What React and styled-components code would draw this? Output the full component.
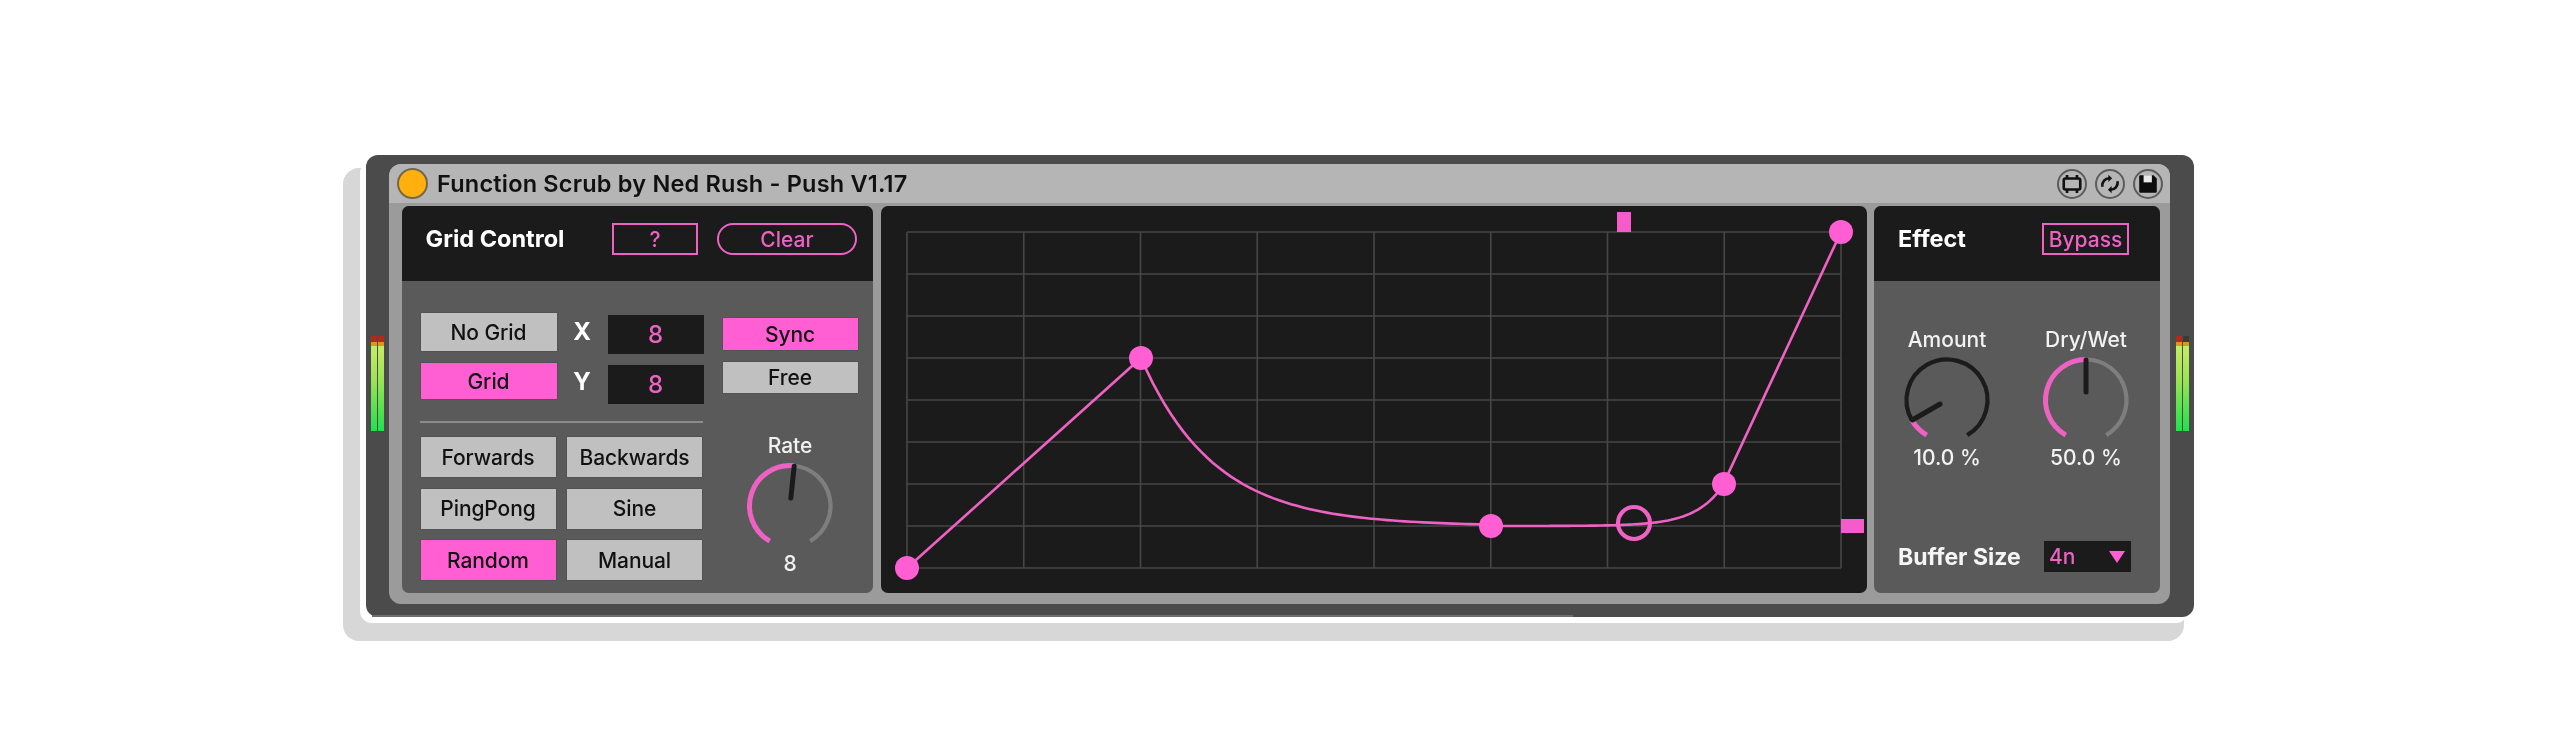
import React from 'react'
import styled, { createGlobalStyle } from 'styled-components'

const PINK = '#ff5fd2'
const LINE_PINK = '#ee62c4'
const DARK = '#1b1b1b'

const GlobalStyle = createGlobalStyle`
    html, body {
        margin: 0;
        background: #fff;
        overflow: hidden;
    }
    body {
        font-family: Inter, "Liberation Sans", sans-serif;
    }
`

// knob angles are measured from straight down, clockwise, 30deg dead zone either side
function polar(cx, cy, r, deg) {
    const a = (deg * Math.PI) / 180
    return [cx - r * Math.sin(a), cy + r * Math.cos(a)]
}

function arc(cx, cy, r, from, to) {
    const [x1, y1] = polar(cx, cy, r, from)
    const [x2, y2] = polar(cx, cy, r, to)
    const large = to - from > 180 ? 1 : 0
    return `M${x1} ${y1}A${r} ${r} 0 ${large} 1 ${x2} ${y2}`
}

function Knob({ value, track }) {
    const deg = 30 + 300 * value
    const [px1, py1] = polar(48, 48, 8, deg)
    const [px2, py2] = polar(48, 48, 40, deg)
    return (
        <KnobSvg viewBox="0 0 96 96">
            <path d={arc(48, 48, 40.5, deg, 330)} fill="none" stroke={track} strokeWidth="4.2" />
            <path d={arc(48, 48, 40.5, 30, deg)} fill="none" stroke={LINE_PINK} strokeWidth="5" />
            <line x1={px1} y1={py1} x2={px2} y2={py2} stroke={DARK} strokeWidth="5" strokeLinecap="round" />
        </KnobSvg>
    )
}

function buildCurve() {
    let d = 'M26 362L260 152'
    for (let x = 260; x <= 610; x += 6) {
        const y = 320 - 168 * Math.exp(-0.0136 * (x - 260))
        d += `L${x} ${y.toFixed(2)}`
    }
    for (let x = 610; x <= 843; x += 3) {
        const y = 320 - 42 * Math.exp(-0.036 * (843 - x))
        d += `L${x} ${y.toFixed(2)}`
    }
    return d + 'L960 26'
}

function Graph() {
    const cols = Array.from({ length: 9 }, (_, i) => 26 + (934 / 8) * i)
    const rows = Array.from({ length: 9 }, (_, i) => 26 + 42 * i)
    const nodes = [[26, 362], [260, 152], [610, 320], [843, 278], [960, 26]]
    return (
        <GraphSvg viewBox="0 0 986 387">
            {cols.map((x) => (
                <line key={x} x1={x} y1="26" x2={x} y2="362" stroke="#474747" strokeWidth="1.6" />
            ))}
            {rows.map((y) => (
                <line key={y} x1="26" y1={y} x2="960" y2={y} stroke="#474747" strokeWidth="1.6" />
            ))}
            <path d={buildCurve()} fill="none" stroke={LINE_PINK} strokeWidth="2.6" />
            {nodes.map(([x, y]) => (
                <circle key={x} cx={x} cy={y} r="12" fill={PINK} />
            ))}
            <circle cx="753" cy="317" r="16" fill="none" stroke={LINE_PINK} strokeWidth="4.2" />
            <rect x="736" y="6" width="14" height="20" fill="#f55bcb" />
            <rect x="960" y="313" width="23" height="14" fill="#f55bcb" />
        </GraphSvg>
    )
}

function Meter({ dim }) {
    return (
        <MeterWrap>
            <MeterBar />
            <MeterBar $dim={dim} />
        </MeterWrap>
    )
}

export default function App() {
    return (
        <Stage>
            <GlobalStyle />
            <Device>
                <Meter />
                <Rack>
                    <TitleBar>
                        <Led />
                        <Title>Function Scrub by Ned Rush - Push V1.17</Title>
                        <RoundIcon>
                            <svg width="22" height="22" viewBox="0 0 20 20" fill="none" stroke="#111" strokeWidth="2.4">
                                <rect x="2.5" y="5" width="15" height="10" rx="1.5" />
                                <path d="M5.5 5V1.8M14.5 5V1.8M5.5 15v3.2M14.5 15v3.2" />
                            </svg>
                        </RoundIcon>
                        <RoundIcon>
                            <svg width="22" height="22" viewBox="0 0 20 20" fill="none" stroke="#111" strokeWidth="2.4">
                                <path d="M3 12.5C2.6 8 5.5 5 9.5 4.8" />
                                <path d="M17 7.5c.4 4.5-2.5 7.5-6.5 7.7" />
                                <path d="M8.5 1.5l3.4 3.3-3.4 3.3z" fill="#111" stroke="none" />
                                <path d="M11.5 11.9l-3.4 3.3 3.4 3.3z" fill="#111" stroke="none" />
                            </svg>
                        </RoundIcon>
                        <RoundIcon>
                            <svg width="22" height="22" viewBox="0 0 20 20">
                                <path d="M3 2h12l3 3v12a1 1 0 0 1-1 1H3a1 1 0 0 1-1-1V3a1 1 0 0 1 1-1z" fill="#0c0c0c" />
                                <rect x="6" y="2" width="7.5" height="6.5" fill="#e8e8e8" />
                            </svg>
                        </RoundIcon>
                    </TitleBar>
                    <RackBody>
                        <Panel $width={471.5}>
                            <PanelHeader>
                                <HeaderTitle $width={186.5}>Grid Control</HeaderTitle>
                                <OutlineButton $width={86}>?</OutlineButton>
                                <OutlineButton $left={19} $width={140} $pill>Clear</OutlineButton>
                            </PanelHeader>
                            <GridBody>
                                <LeftCol>
                                    <ValueRow>
                                        <ToggleButton $h={38}>No Grid</ToggleButton>
                                        <AxisLabel>X</AxisLabel>
                                        <NumberBox>8</NumberBox>
                                    </ValueRow>
                                    <ValueRow $gap={9}>
                                        <ToggleButton $h={36} $on>Grid</ToggleButton>
                                        <AxisLabel>Y</AxisLabel>
                                        <NumberBox>8</NumberBox>
                                    </ValueRow>
                                    <Divider />
                                    <ModeGrid>
                                        <ToggleButton>Forwards</ToggleButton>
                                        <ToggleButton>Backwards</ToggleButton>
                                        <ToggleButton>PingPong</ToggleButton>
                                        <ToggleButton>Sine</ToggleButton>
                                        <ToggleButton $on>Random</ToggleButton>
                                        <ToggleButton>Manual</ToggleButton>
                                    </ModeGrid>
                                </LeftCol>
                                <RightCol>
                                    <ToggleButton $h={32} $on>Sync</ToggleButton>
                                    <ToggleButton $h={31}>Free</ToggleButton>
                                    <KnobBlock $top={28}>
                                        <KnobLabel>Rate</KnobLabel>
                                        <Knob value={0.52} track="#7e7e7e" />
                                        <KnobValue>8</KnobValue>
                                    </KnobBlock>
                                </RightCol>
                            </GridBody>
                        </Panel>
                        <GraphPanel>
                            <Graph />
                        </GraphPanel>
                        <Panel $width={286}>
                            <PanelHeader>
                                <HeaderTitle $width={144}>Effect</HeaderTitle>
                                <OutlineButton $width={87}>Bypass</OutlineButton>
                            </PanelHeader>
                            <EffectBody>
                                <KnobRow>
                                    <KnobBlock>
                                        <KnobLabel>Amount</KnobLabel>
                                        <Knob value={0.1} track={DARK} />
                                        <KnobValue>10.0 %</KnobValue>
                                    </KnobBlock>
                                    <KnobBlock>
                                        <KnobLabel>Dry/Wet</KnobLabel>
                                        <Knob value={0.5} track="#7e7e7e" />
                                        <KnobValue>50.0 %</KnobValue>
                                    </KnobBlock>
                                </KnobRow>
                                <BufferRow>
                                    <BufferLabel>Buffer Size</BufferLabel>
                                    <Dropdown>
                                        4n
                                        <DropArrow />
                                    </Dropdown>
                                </BufferRow>
                            </EffectBody>
                        </Panel>
                    </RackBody>
                </Rack>
                <Meter dim />
            </Device>
        </Stage>
    )
}

const Stage = styled.div`
    padding: 155px 0 0 366px;
    height: 734px;
    box-sizing: border-box;
    filter: blur(0.5px);
`

const Device = styled.div`
    position: relative;
    box-sizing: border-box;
    width: 1828px;
    height: 462px;
    padding: 9px 0 13px;
    display: grid;
    grid-template-columns: 23px 1fr 24px;
    background: #4b4b4b;
    border-radius: 12px;
    box-shadow: -6px 6px 0 #fff;
    /* the drop shadow plate behind the device */
    &::before {
        content: '';
        position: absolute;
        z-index: -1;
        left: -23px;
        right: 10px;
        top: 13px;
        bottom: -24px;
        background: #d7d7d7;
        border-radius: 16px;
    }
    &::after {
        content: '';
        position: absolute;
        left: 6px;
        bottom: 0;
        width: 1201px;
        height: 2px;
        background: #6e6e6e;
    }
`

const MeterWrap = styled.div`
    display: flex;
    gap: 1px;
    justify-content: center;
    align-self: start;
    margin-top: 172px;
`

const MeterBar = styled.div`
    width: 6px;
    height: 95px;
    background: linear-gradient(
        to bottom,
        ${(p) => (p.$dim ? '#3a3a3a' : '#b02a22')} 0,
        ${(p) => (p.$dim ? '#3a3a3a' : '#b02a22')} 6px,
        #e0941c 6px,
        #e0941c 10px,
        #c6ea68 10px,
        #9ce455 45%,
        #22e04c 100%
    );
`

const Rack = styled.div`
    background: #9b9b9b;
    border-radius: 12px;
    display: flex;
    flex-direction: column;
    min-width: 0;
`

const TitleBar = styled.div`
    height: 39px;
    background: #b5b5b5;
    border-radius: 12px 12px 0 0;
    display: flex;
    align-items: center;
    padding: 0 7px 0 8px;
    gap: 8px;
`

const Led = styled.div`
    width: 27px;
    height: 27px;
    border-radius: 50%;
    background: #ffb00f;
    border: 2px solid #75684a;
`

const Title = styled.div`
    flex: 1;
    margin-left: 1px;
    font-size: 23.5px;
    font-weight: 600;
    letter-spacing: 0.2px;
    color: #111;
    white-space: nowrap;
`

const RoundIcon = styled.div`
    box-sizing: border-box;
    width: 30px;
    height: 30px;
    border-radius: 50%;
    border: 2px solid #5c5c5c;
    display: flex;
    align-items: center;
    justify-content: center;
`

const RackBody = styled.div`
    flex: 1;
    display: flex;
    gap: 7.5px;
    padding: 3px 10px 11px 12.5px;
`

const Panel = styled.div`
    width: ${(p) => p.$width}px;
    display: flex;
    flex-direction: column;
    background: #5a5a5a;
    border-radius: 7px;
    overflow: hidden;
`

const PanelHeader = styled.div`
    height: 75px;
    flex: none;
    background: ${DARK};
    display: flex;
    align-items: flex-start;
    padding: 17px 0 0 24px;
    box-sizing: border-box;
`

const HeaderTitle = styled.div`
    width: ${(p) => p.$width}px;
    flex: none;
    font-size: 23.5px;
    line-height: 32px;
    font-weight: 700;
    color: #fff;
    white-space: nowrap;
`

const OutlineButton = styled.div`
    box-sizing: border-box;
    margin-left: ${(p) => p.$left || 0}px;
    width: ${(p) => p.$width}px;
    height: 32px;
    display: flex;
    align-items: center;
    justify-content: center;
    border: 2.5px solid ${LINE_PINK};
    border-radius: ${(p) => (p.$pill ? '16px' : '0')};
    color: ${LINE_PINK};
    font-size: 21px;
    font-weight: 500;
`

const GridBody = styled.div`
    flex: 1;
    display: flex;
    gap: 20px;
    padding: 32px 0 0 19px;
`

const LeftCol = styled.div`
    width: 282px;
`

const ValueRow = styled.div`
    display: grid;
    grid-template-columns: 136px 51px 96px;
    align-items: start;
    margin-top: ${(p) => p.$gap || 0}px;
`

const ToggleButton = styled.div`
    height: ${(p) => (p.$h ? `${p.$h}px` : 'auto')};
    display: flex;
    align-items: center;
    justify-content: center;
    background: ${(p) => (p.$on ? PINK : '#c0c0c0')};
    box-shadow: 0 0 1px rgba(0, 0, 0, 0.5);
    color: #111;
    font-size: 21px;
    font-weight: 500;
    letter-spacing: -0.1px;
`

const AxisLabel = styled.div`
    text-align: center;
    font-size: 24px;
    line-height: 38px;
    font-weight: 700;
    color: #fff;
`

const NumberBox = styled.div`
    margin-top: 2px;
    height: 39px;
    display: flex;
    align-items: center;
    justify-content: center;
    background: ${DARK};
    color: ${LINE_PINK};
    font-size: 24px;
    font-weight: 500;
`

const Divider = styled.div`
    height: 2px;
    margin: 17px 0 14px -1px;
    background: #8b8b8b;
`

const ModeGrid = styled.div`
    display: grid;
    grid-template-columns: 135px 135px;
    grid-auto-rows: 40px;
    column-gap: 11.5px;
    row-gap: 11.5px;
`

const RightCol = styled.div`
    width: 135px;
    padding-top: 5px;
    display: flex;
    flex-direction: column;
    gap: 12px;
`

const KnobBlock = styled.div`
    display: flex;
    flex-direction: column;
    align-items: center;
    width: 130px;
    margin-top: ${(p) => p.$top || 0}px;
    align-self: center;
`

const KnobSvg = styled.svg`
    width: 96px;
    height: 96px;
    margin: -1px 0 -3px;
    overflow: visible;
`

const KnobLabel = styled.div`
    font-size: 21px;
    line-height: 26px;
    font-weight: 500;
    color: #f2f2f2;
`

const KnobValue = styled(KnobLabel)``

const GraphPanel = styled.div`
    flex: 1;
    background: ${DARK};
    border-radius: 7px;
`

const GraphSvg = styled.svg`
    display: block;
    width: 100%;
    height: 100%;
`

const EffectBody = styled.div`
    flex: 1;
    display: flex;
    flex-direction: column;
    justify-content: space-between;
    padding: 46px 0 21px;
`

const KnobRow = styled.div`
    display: flex;
    gap: 9px;
    padding-left: 8px;
`

const BufferRow = styled.div`
    display: flex;
    align-items: center;
    padding-left: 24px;
`

const BufferLabel = styled.div`
    width: 146px;
    font-size: 23px;
    font-weight: 700;
    color: #f5f5f5;
    white-space: nowrap;
`

const Dropdown = styled.div`
    position: relative;
    box-sizing: border-box;
    width: 87px;
    height: 31px;
    padding-left: 5px;
    display: flex;
    align-items: center;
    background: ${DARK};
    color: ${LINE_PINK};
    font-size: 21px;
    font-weight: 500;
`

const DropArrow = styled.div`
    position: absolute;
    right: 6px;
    top: 10px;
    width: 0;
    height: 0;
    border-left: 8px solid transparent;
    border-right: 8px solid transparent;
    border-top: 12px solid ${PINK};
`
